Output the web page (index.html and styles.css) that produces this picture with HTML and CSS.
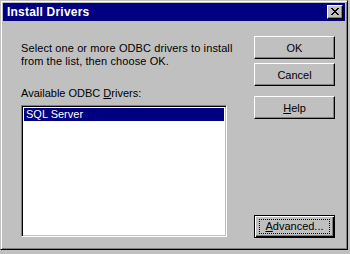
FILE: index.html
```html
<!DOCTYPE html>
<html lang="en">
<head>
    <meta charset="UTF-8">
    <meta name="viewport" content="width=device-width, initial-scale=1.0">
    <title>Install Drivers</title>
    <link rel="stylesheet" href="styles.css">
</head>
<body>

    <div class="window">
        <!-- Caption -->
        <div class="titlebar">
            <span class="title">Install Drivers</span>
            <button class="close-btn" aria-label="Close">
                <svg width="8" height="7" viewBox="0 0 8 7" shape-rendering="crispEdges">
                    <path d="M0 0h2v1h-2z M6 0h2v1h-2z M1 1h2v1h-2z M5 1h2v1h-2z M2 2h4v1h-4z M3 3h2v1h-2z M2 4h4v1h-4z M1 5h2v1h-2z M5 5h2v1h-2z M0 6h2v1h-2z M6 6h2v1h-2z" fill="#000"/>
                </svg>
            </button>
        </div>

        <div class="content">
            <div class="main">
                <p class="intro">Select one or more ODBC drivers to install<br>from the list, then choose OK.</p>
                <div class="list-label">Available ODBC <u>D</u>rivers:</div>
                <div class="listbox">
                    <div class="list-item selected">SQL Server</div>
                </div>
            </div>

            <div class="buttons">
                <button class="btn">OK</button>
                <button class="btn">Cancel</button>
                <button class="btn help"><u>H</u>elp</button>
                <!-- default button, has focus -->
                <button class="btn default"><span class="focus"><u>A</u>dvanced...</span></button>
            </div>
        </div>
    </div>

</body>
</html>
```

FILE: styles.css
```css
body {
    margin: 0;
    background-color: #c0c0c0;
    font-family: "Liberation Sans", Arial, sans-serif;
    font-size: 11px;
    color: #000;
}

.window {
    width: 348px;
    height: 250px;
    box-sizing: border-box;
    background-color: #c0c0c0;
    border: 1px solid;
    border-color: #c0c0c0 #000 #000 #c0c0c0;
    box-shadow: inset 1px 1px #fff, inset -1px -1px #808080;
    padding: 2px;
    display: flex;
    flex-direction: column;
}

.titlebar {
    height: 18px;
    background-color: #000080;
    display: flex;
    align-items: center;
    padding: 0 2px 0 4px;
}

    .titlebar .title {
        flex: 1;
        color: #fff;
        font-weight: bold;
        font-size: 12px;
        letter-spacing: 0.2px;
    }

.close-btn {
    width: 16px;
    height: 14px;
    padding: 0;
    margin: 0;
    background-color: #c0c0c0;
    border: 1px solid;
    border-color: #fff #000 #000 #fff;
    box-shadow: inset -1px -1px #808080;
    display: flex;
    align-items: center;
    justify-content: center;
}

    .close-btn svg {
        display: block;
        margin: 0 1px 1px 0;
    }

.content {
    flex: 1;
    display: flex;
}

.main {
    flex: none;
    width: 206px;
    padding: 21px 0 9px 18px;
    display: flex;
    flex-direction: column;
}

.intro {
    margin: 0;
    line-height: 13px;
    letter-spacing: 0.1px;
    white-space: nowrap;
}

.list-label {
    margin-top: 19px;
    line-height: 13px;
}

.listbox {
    margin-top: 5px;
    width: 206px;
    height: 132px;
    box-sizing: border-box;
    background-color: #fff;
    border: 1px solid;
    border-color: #808080 #fff #fff #808080;
    box-shadow: inset 1px 1px #000, inset -1px -1px #c0c0c0;
    padding: 2px;
}

.list-item {
    height: 13px;
    line-height: 13px;
    padding-left: 2px;
    white-space: nowrap;
}

    .list-item.selected {
        background-color: #000080;
        color: #fff;
    }

.buttons {
    margin-left: 27px;
    padding: 15px 0 9px 0;
    display: flex;
    flex-direction: column;
    gap: 4px;
}

.btn {
    width: 81px;
    height: 23px;
    margin: 0;
    padding: 0;
    font-family: inherit;
    font-size: 11px;
    color: #000;
    background-color: #c0c0c0;
    border: 1px solid;
    border-color: #fff #000 #000 #fff;
    box-shadow: inset -1px -1px #808080;
}

    .btn.help {
        margin-top: 6px;
    }

    .btn.default {
        margin-top: auto;
        border-color: #000;
        box-shadow: inset 1px 1px #fff, inset -1px -1px #000, inset -2px -2px #808080;
        display: flex;
        align-items: center;
        justify-content: center;
    }

.focus {
    display: block;
    box-sizing: border-box;
    width: 71px;
    height: 15px;
    line-height: 13px;
    border: 1px dotted #000;
}
```
